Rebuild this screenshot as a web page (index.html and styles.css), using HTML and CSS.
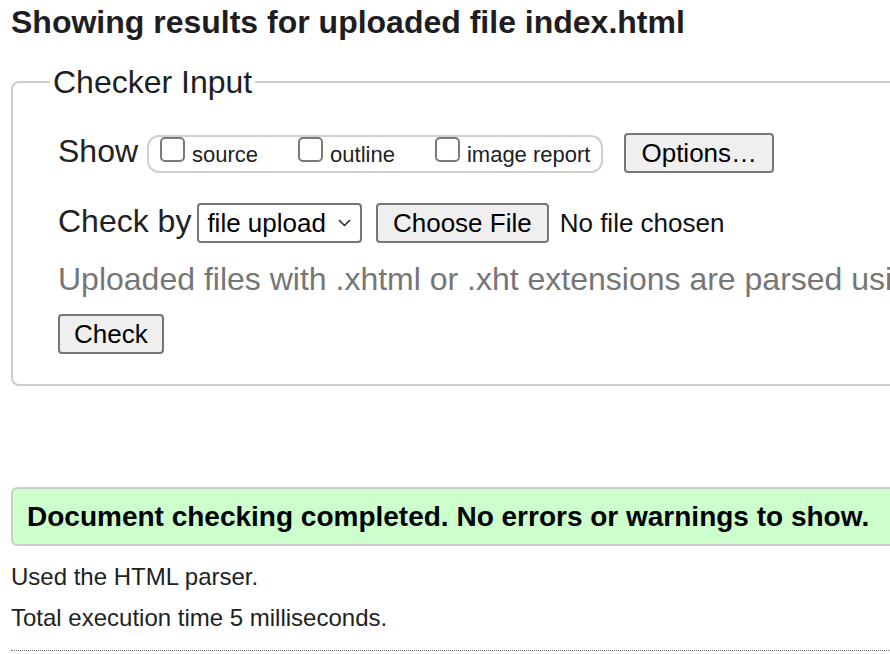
FILE: index.html
```html
<!DOCTYPE html>
<html lang="en">
<head>
<meta charset="utf-8">
<title>Showing results for uploaded file index.html</title>
<link rel="stylesheet" href="styles.css">
</head>
<body>
<div class="page">
  <h1 class="title">Showing results for uploaded file index.html</h1>
  <fieldset class="checker">
    <legend class="legend">Checker Input</legend>
    <div class="inner">
      <div class="row row-show">
        <span class="lbl lbl-show">Show</span>
        <span class="opts">
          <label class="opt"><span class="cb"></span>source</label>
          <label class="opt"><span class="cb"></span>outline</label>
          <label class="opt"><span class="cb"></span>image report</label>
        </span>
        <button class="btn btn-options" type="button">Options…</button>
      </div>
      <div class="row row-check">
        <span class="lbl lbl-check">Check by</span>
        <span class="select">file upload<svg class="chev" width="13" height="8" viewBox="0 0 13 8"><polyline points="1,1 6.5,6.5 12,1" fill="none" stroke="#222" stroke-width="1.5"/></svg></span>
        <button class="btn btn-file" type="button">Choose File</button>
        <span class="nofile">No file chosen</span>
      </div>
      <p class="note">Uploaded files with .xhtml or .xht extensions are parsed using the XML parser.</p>
      <button class="btn btn-check" type="button">Check</button>
    </div>
  </fieldset>
  <p class="success">Document checking completed. No errors or warnings to show.</p>
  <p class="info info-first">Used the HTML parser.</p>
  <p class="info">Total execution time 5 milliseconds.</p>
  <div class="dotted"></div>
</div>
</body>
</html>
```
FILE: styles.css
```css
html {
  overflow: hidden;
  background: #fff;
}
body {
  margin: 4px 0 0 11px;
  font-family: "Liberation Sans", Arial, Helvetica, sans-serif;
  color: #222;
}
.page {
  width: 1150px;
}
.title {
  margin: 0 0 24px 0;
  font-size: 32px;
  line-height: 36px;
  font-weight: bold;
  color: #1e1e22;
}
.checker {
  margin: 0;
  padding: 33px 37px 30px 37px;
  border: 2px solid #cdcdcd;
  border-radius: 8px;
  min-width: 0;
}
.legend {
  padding: 0 3px;
  font-size: 32px;
  line-height: 36px;
  color: #1e1e22;
}
.inner {
  margin-left: 8px;
}
.row {
  display: flex;
  align-items: baseline;
  white-space: nowrap;
}
.row-check {
  margin-top: 30px;
}
.lbl {
  font-size: 32px;
  line-height: 36px;
}
.lbl-show {
  margin-right: 9px;
}
.lbl-check {
  margin-right: 6px;
}
.opts {
  display: flex;
  align-items: baseline;
  gap: 40px;
  height: 34px;
  padding: 0 11px 0 11px;
  border: 2px solid #cfcfcf;
  border-radius: 12px;
  font-size: 22px;
  line-height: 26px;
  color: #222;
}
.opt {
  display: flex;
  align-items: baseline;
}
.cb {
  display: inline-block;
  box-sizing: border-box;
  width: 25px;
  height: 25px;
  margin: 0 7px 1px 0;
  border: 2px solid #7a7a7a;
  border-radius: 5px;
  background: #fff;
}
.btn {
  font-family: "Liberation Sans", Arial, Helvetica, sans-serif;
  font-size: 26px;
  line-height: 30px;
  color: #000;
  background: #efefef;
  border: 2px solid #767676;
  border-radius: 4px;
  padding: 3px 15px;
  margin: 0;
}
.btn-options {
  margin-left: 21px;
}
.select {
  display: inline-flex;
  align-items: baseline;
  font-size: 26px;
  line-height: 30px;
  color: #000;
  background: #fff;
  border: 2px solid #767676;
  border-radius: 4px;
  padding: 3px 9px 3px 8px;
}
.chev {
  margin-left: 12px;
  align-self: center;
}
.btn-file {
  margin-left: 14px;
}
.nofile {
  margin-left: 11px;
  font-size: 26px;
  line-height: 30px;
  color: #111;
}
.note {
  margin: 18px 0 17px 0;
  font-size: 32px;
  line-height: 36px;
  color: #767676;
  white-space: nowrap;
}
.btn-check {
  display: block;
  padding: 3px 14px;
}
.success {
  margin: 101px 0 0 0;
  padding: 12px 14px 11px 14px;
  background: #ccffcc;
  border: 2px solid #cccccc;
  border-radius: 6px;
  font-size: 28px;
  line-height: 32px;
  font-weight: bold;
  color: #000;
  white-space: nowrap;
}
.info {
  margin: 13px 0 0 0;
  font-size: 24px;
  line-height: 28px;
  color: #222;
}
.info-first {
  margin-top: 17px;
}
.dotted {
  margin-top: 18px;
  border-top: 1px dotted #777;
}
```
